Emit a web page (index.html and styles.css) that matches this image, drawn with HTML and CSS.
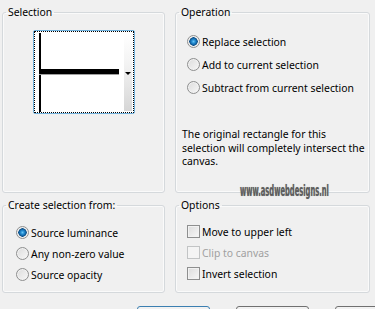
FILE: index.html
```html
<!DOCTYPE html>
<html>
<head>
    <title>Selection From Mask</title>
    <link rel="stylesheet" href="styles.css">
</head>
<body>
    <div class="dialog">
        <div class="groups">
            <fieldset class="group">
                <legend>Selection</legend>
                <div class="preview">
                    <div class="preview-canvas">
                        <span class="line-v"></span>
                        <span class="line-h"></span>
                    </div>
                    <div class="preview-drop"><span class="arrow"></span></div>
                </div>
            </fieldset>

            <fieldset class="group">
                <legend>Operation</legend>
                <div class="choices operation">
                    <label class="choice"><input type="radio" name="op" checked> Replace selection</label>
                    <label class="choice"><input type="radio" name="op"> Add to current selection</label>
                    <label class="choice"><input type="radio" name="op"> Subtract from current selection</label>
                </div>
                <p class="note">The original rectangle for this selection will completely intersect the canvas.</p>
            </fieldset>

            <fieldset class="group">
                <legend>Create selection from:</legend>
                <div class="choices source">
                    <label class="choice"><input type="radio" name="src" checked> Source luminance</label>
                    <label class="choice"><input type="radio" name="src"> Any non-zero value</label>
                    <label class="choice"><input type="radio" name="src"> Source opacity</label>
                </div>
            </fieldset>

            <fieldset class="group">
                <legend>Options</legend>
                <div class="choices options">
                    <label class="choice"><input type="checkbox"> Move to upper left</label>
                    <label class="choice disabled"><input type="checkbox" disabled> Clip to canvas</label>
                    <label class="choice"><input type="checkbox"> Invert selection</label>
                </div>
            </fieldset>
        </div>

        <!-- only the top edge of the dialog buttons is visible -->
        <div class="buttons">
            <button class="default" aria-label="OK"></button>
            <button aria-label="Cancel"></button>
            <button aria-label="Help"></button>
        </div>

        <div class="watermark">www.asdwebdesigns.nl</div>
    </div>
</body>
</html>
```

FILE: styles.css
```css
body {
    margin: 0;
    background-color: #f0f0f0;
    font-family: "Noto Sans", "Liberation Sans", sans-serif;
    font-size: 10.4px;
    color: #000;
}

.dialog {
    position: relative;
    width: 375px;
    height: 309px;
    overflow: hidden;
}

.groups {
    display: grid;
    grid-template-columns: 163px 195px;
    grid-template-rows: 188px 95px;
    column-gap: 10px;
    row-gap: 5px;
    padding: 5px 0 0 2px;
}

.group {
    margin: 0;
    padding: 0;
    border: 1px solid #d5d9dc;
    border-radius: 3px;
    box-shadow: inset 0 0 0 1px #fafafa;
    min-width: 0;
}

.group legend {
    margin-left: 3px;
    padding: 0 2px;
    line-height: 14px;
}

/* preview of the mask */
.preview {
    display: flex;
    width: 100px;
    height: 82px;
    margin: 11px 0 0 30px;
    border: 1px solid #6fb0db;
    border-radius: 2px;
    background: #fff;
    outline: 1px dotted #000;
    outline-offset: -2px;
}

.preview-canvas {
    position: relative;
    flex: 1;
}

.line-v {
    position: absolute;
    left: 5px;
    top: 2px;
    bottom: 1px;
    width: 2px;
    background: #000;
}

.line-h {
    position: absolute;
    left: 5px;
    right: 5px;
    top: 38px;
    height: 5px;
    background: #000;
    border-bottom: 1px solid #a0a0a0;
}

.preview-drop {
    width: 8px;
    margin: 2px 2px 2px 0;
    background: linear-gradient(#fff, #f3f3f3 40%, #d6d6d6);
    display: flex;
    justify-content: center;
    padding-top: 39px;
}

.arrow {
    width: 0;
    height: 0;
    border-left: 3px solid transparent;
    border-right: 3px solid transparent;
    border-top: 3px solid #000;
}

/* radio and check lists */
.choices {
    display: flex;
    flex-direction: column;
}

.operation {
    gap: 8px;
    padding: 15px 0 0 11px;
}

.source {
    gap: 6px;
    padding: 13px 0 0 13px;
}

.options {
    gap: 6px;
    padding: 12px 0 0 11px;
}

.choice {
    display: flex;
    align-items: center;
    gap: 2px;
    height: 15px;
    white-space: nowrap;
}

.choice.disabled {
    color: #a0a0a0;
}

.choice input {
    appearance: none;
    width: 13px;
    height: 13px;
    margin: 0;
    border: 1px solid #8e8f8f;
    background: linear-gradient(135deg, #dcdcdc, #f7f7f7);
    box-shadow: inset 0 0 0 1px #f2f2f2;
}

.choice input[type="radio"] {
    border-radius: 50%;
}

.choice input[type="radio"]:checked {
    background: radial-gradient(circle, #65c4f5 0, #1f86cc 2px, #0d4f87 4px, #dadada 4.5px, #f5f5f5 6px);
}

.choice input:disabled {
    border-color: #c2c4c5;
    background: #f4f4f4;
    box-shadow: none;
}

.note {
    margin: 33px 4px 0 6px;
    line-height: 13.5px;
}

/* dialog buttons */
.buttons {
    display: flex;
    gap: 26px;
    padding: 13px 0 0 137px;
}

.buttons button {
    flex: none;
    width: 73px;
    height: 23px;
    border: 1px solid #707070;
    border-radius: 3px;
    background: linear-gradient(#f2f2f2, #ebebeb 50%, #dddddd 50%, #cfcfcf);
}

.buttons button.default {
    border-color: #3c7fb1;
}

.watermark {
    position: absolute;
    left: 240px;
    top: 183px;
    font-family: "DejaVu Sans Condensed", "Liberation Sans Narrow", sans-serif;
    font-weight: bold;
    font-size: 15px;
    line-height: 17px;
    color: #5c5c5c;
    text-shadow: 0 0 1px #999;
    transform: scaleX(0.5);
    transform-origin: left center;
}
```
